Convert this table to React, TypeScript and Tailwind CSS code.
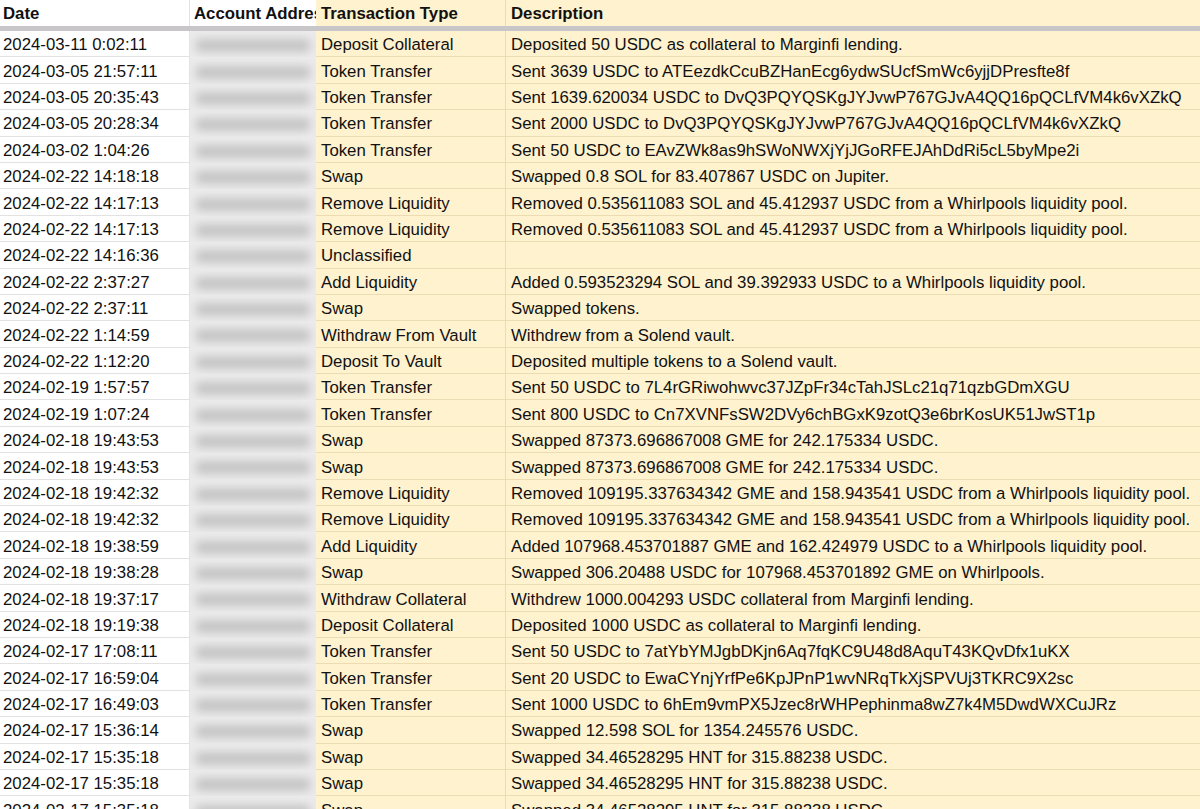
import React from "react";

type Row = [string, string, string];

const rows: Row[] = [
  ["2024-03-11 0:02:11", "Deposit Collateral", "Deposited 50 USDC as collateral to Marginfi lending."],
  ["2024-03-05 21:57:11", "Token Transfer", "Sent 3639 USDC to ATEezdkCcuBZHanEcg6ydwSUcfSmWc6yjjDPresfte8f"],
  ["2024-03-05 20:35:43", "Token Transfer", "Sent 1639.620034 USDC to DvQ3PQYQSKgJYJvwP767GJvA4QQ16pQCLfVM4k6vXZkQ"],
  ["2024-03-05 20:28:34", "Token Transfer", "Sent 2000 USDC to DvQ3PQYQSKgJYJvwP767GJvA4QQ16pQCLfVM4k6vXZkQ"],
  ["2024-03-02 1:04:26", "Token Transfer", "Sent 50 USDC to EAvZWk8as9hSWoNWXjYjJGoRFEJAhDdRi5cL5byMpe2i"],
  ["2024-02-22 14:18:18", "Swap", "Swapped 0.8 SOL for 83.407867 USDC on Jupiter."],
  ["2024-02-22 14:17:13", "Remove Liquidity", "Removed 0.535611083 SOL and 45.412937 USDC from a Whirlpools liquidity pool."],
  ["2024-02-22 14:17:13", "Remove Liquidity", "Removed 0.535611083 SOL and 45.412937 USDC from a Whirlpools liquidity pool."],
  ["2024-02-22 14:16:36", "Unclassified", ""],
  ["2024-02-22 2:37:27", "Add Liquidity", "Added 0.593523294 SOL and 39.392933 USDC to a Whirlpools liquidity pool."],
  ["2024-02-22 2:37:11", "Swap", "Swapped tokens."],
  ["2024-02-22 1:14:59", "Withdraw From Vault", "Withdrew from a Solend vault."],
  ["2024-02-22 1:12:20", "Deposit To Vault", "Deposited multiple tokens to a Solend vault."],
  ["2024-02-19 1:57:57", "Token Transfer", "Sent 50 USDC to 7L4rGRiwohwvc37JZpFr34cTahJSLc21q71qzbGDmXGU"],
  ["2024-02-19 1:07:24", "Token Transfer", "Sent 800 USDC to Cn7XVNFsSW2DVy6chBGxK9zotQ3e6brKosUK51JwST1p"],
  ["2024-02-18 19:43:53", "Swap", "Swapped 87373.696867008 GME for 242.175334 USDC."],
  ["2024-02-18 19:43:53", "Swap", "Swapped 87373.696867008 GME for 242.175334 USDC."],
  ["2024-02-18 19:42:32", "Remove Liquidity", "Removed 109195.337634342 GME and 158.943541 USDC from a Whirlpools liquidity pool."],
  ["2024-02-18 19:42:32", "Remove Liquidity", "Removed 109195.337634342 GME and 158.943541 USDC from a Whirlpools liquidity pool."],
  ["2024-02-18 19:38:59", "Add Liquidity", "Added 107968.453701887 GME and 162.424979 USDC to a Whirlpools liquidity pool."],
  ["2024-02-18 19:38:28", "Swap", "Swapped 306.20488 USDC for 107968.453701892 GME on Whirlpools."],
  ["2024-02-18 19:37:17", "Withdraw Collateral", "Withdrew 1000.004293 USDC collateral from Marginfi lending."],
  ["2024-02-18 19:19:38", "Deposit Collateral", "Deposited 1000 USDC as collateral to Marginfi lending."],
  ["2024-02-17 17:08:11", "Token Transfer", "Sent 50 USDC to 7atYbYMJgbDKjn6Aq7fqKC9U48d8AquT43KQvDfx1uKX"],
  ["2024-02-17 16:59:04", "Token Transfer", "Sent 20 USDC to EwaCYnjYrfPe6KpJPnP1wvNRqTkXjSPVUj3TKRC9X2sc"],
  ["2024-02-17 16:49:03", "Token Transfer", "Sent 1000 USDC to 6hEm9vmPX5Jzec8rWHPephinma8wZ7k4M5DwdWXCuJRz"],
  ["2024-02-17 15:36:14", "Swap", "Swapped 12.598 SOL for 1354.245576 USDC."],
  ["2024-02-17 15:35:18", "Swap", "Swapped 34.46528295 HNT for 315.88238 USDC."],
  ["2024-02-17 15:35:18", "Swap", "Swapped 34.46528295 HNT for 315.88238 USDC."],
  ["2024-02-17 15:35:18", "Swap", "Swapped 34.46528295 HNT for 315.88238 USDC."],
];

export default function App() {
  return (
    <div className="w-[1200px] h-[809px] overflow-hidden bg-white text-[#111] font-['Liberation_Sans',Arial,sans-serif] text-[16.8px] leading-none">
      {/* header */}
      <div className="grid grid-cols-[190px_126px_190px_1fr] h-[26px] font-bold">
        <div className="flex items-center pt-[2px] pl-[3px] border-r border-[#e2e2e2] whitespace-nowrap overflow-hidden">Date</div>
        <div className="flex items-center pt-[2px] pl-[4px] whitespace-nowrap overflow-hidden">Account Address</div>
        <div className="flex items-center pt-[2px] pl-[5px] bg-[#fff2cf] border-r border-[#ecdcb3] whitespace-nowrap overflow-hidden">Transaction Type</div>
        <div className="flex items-center pt-[2px] pl-[5px] bg-[#fff2cf] whitespace-nowrap overflow-hidden">Description</div>
      </div>
      <div className="h-[5px] bg-[#c8c6c9]" />
      {/* body */}
      <div className="flex flex-col">
        {rows.map((r, i) => (
          <div key={i} className="grid grid-cols-[190px_126px_190px_1fr] h-[26.4px] shrink-0">
            <div className="flex items-center pt-[4px] pl-[3px] border-r border-b border-[#e2e2e2] whitespace-nowrap overflow-hidden">{r[0]}</div>
            <div className="bg-[#ececec] flex items-center pt-[3px] overflow-hidden">
              <div className="mx-[6px] h-[13px] w-full bg-[#c4c4c4] blur-[5px]" />
            </div>
            <div className="flex items-center pt-[4px] pl-[5px] bg-[#fff2cf] border-r border-b border-[#ecdcb3] whitespace-nowrap overflow-hidden">{r[1]}</div>
            <div className="flex items-center pt-[4px] pl-[5px] bg-[#fff2cf] border-b border-[#ecdcb3] whitespace-nowrap overflow-hidden">{r[2]}</div>
          </div>
        ))}
      </div>
    </div>
  );
}
